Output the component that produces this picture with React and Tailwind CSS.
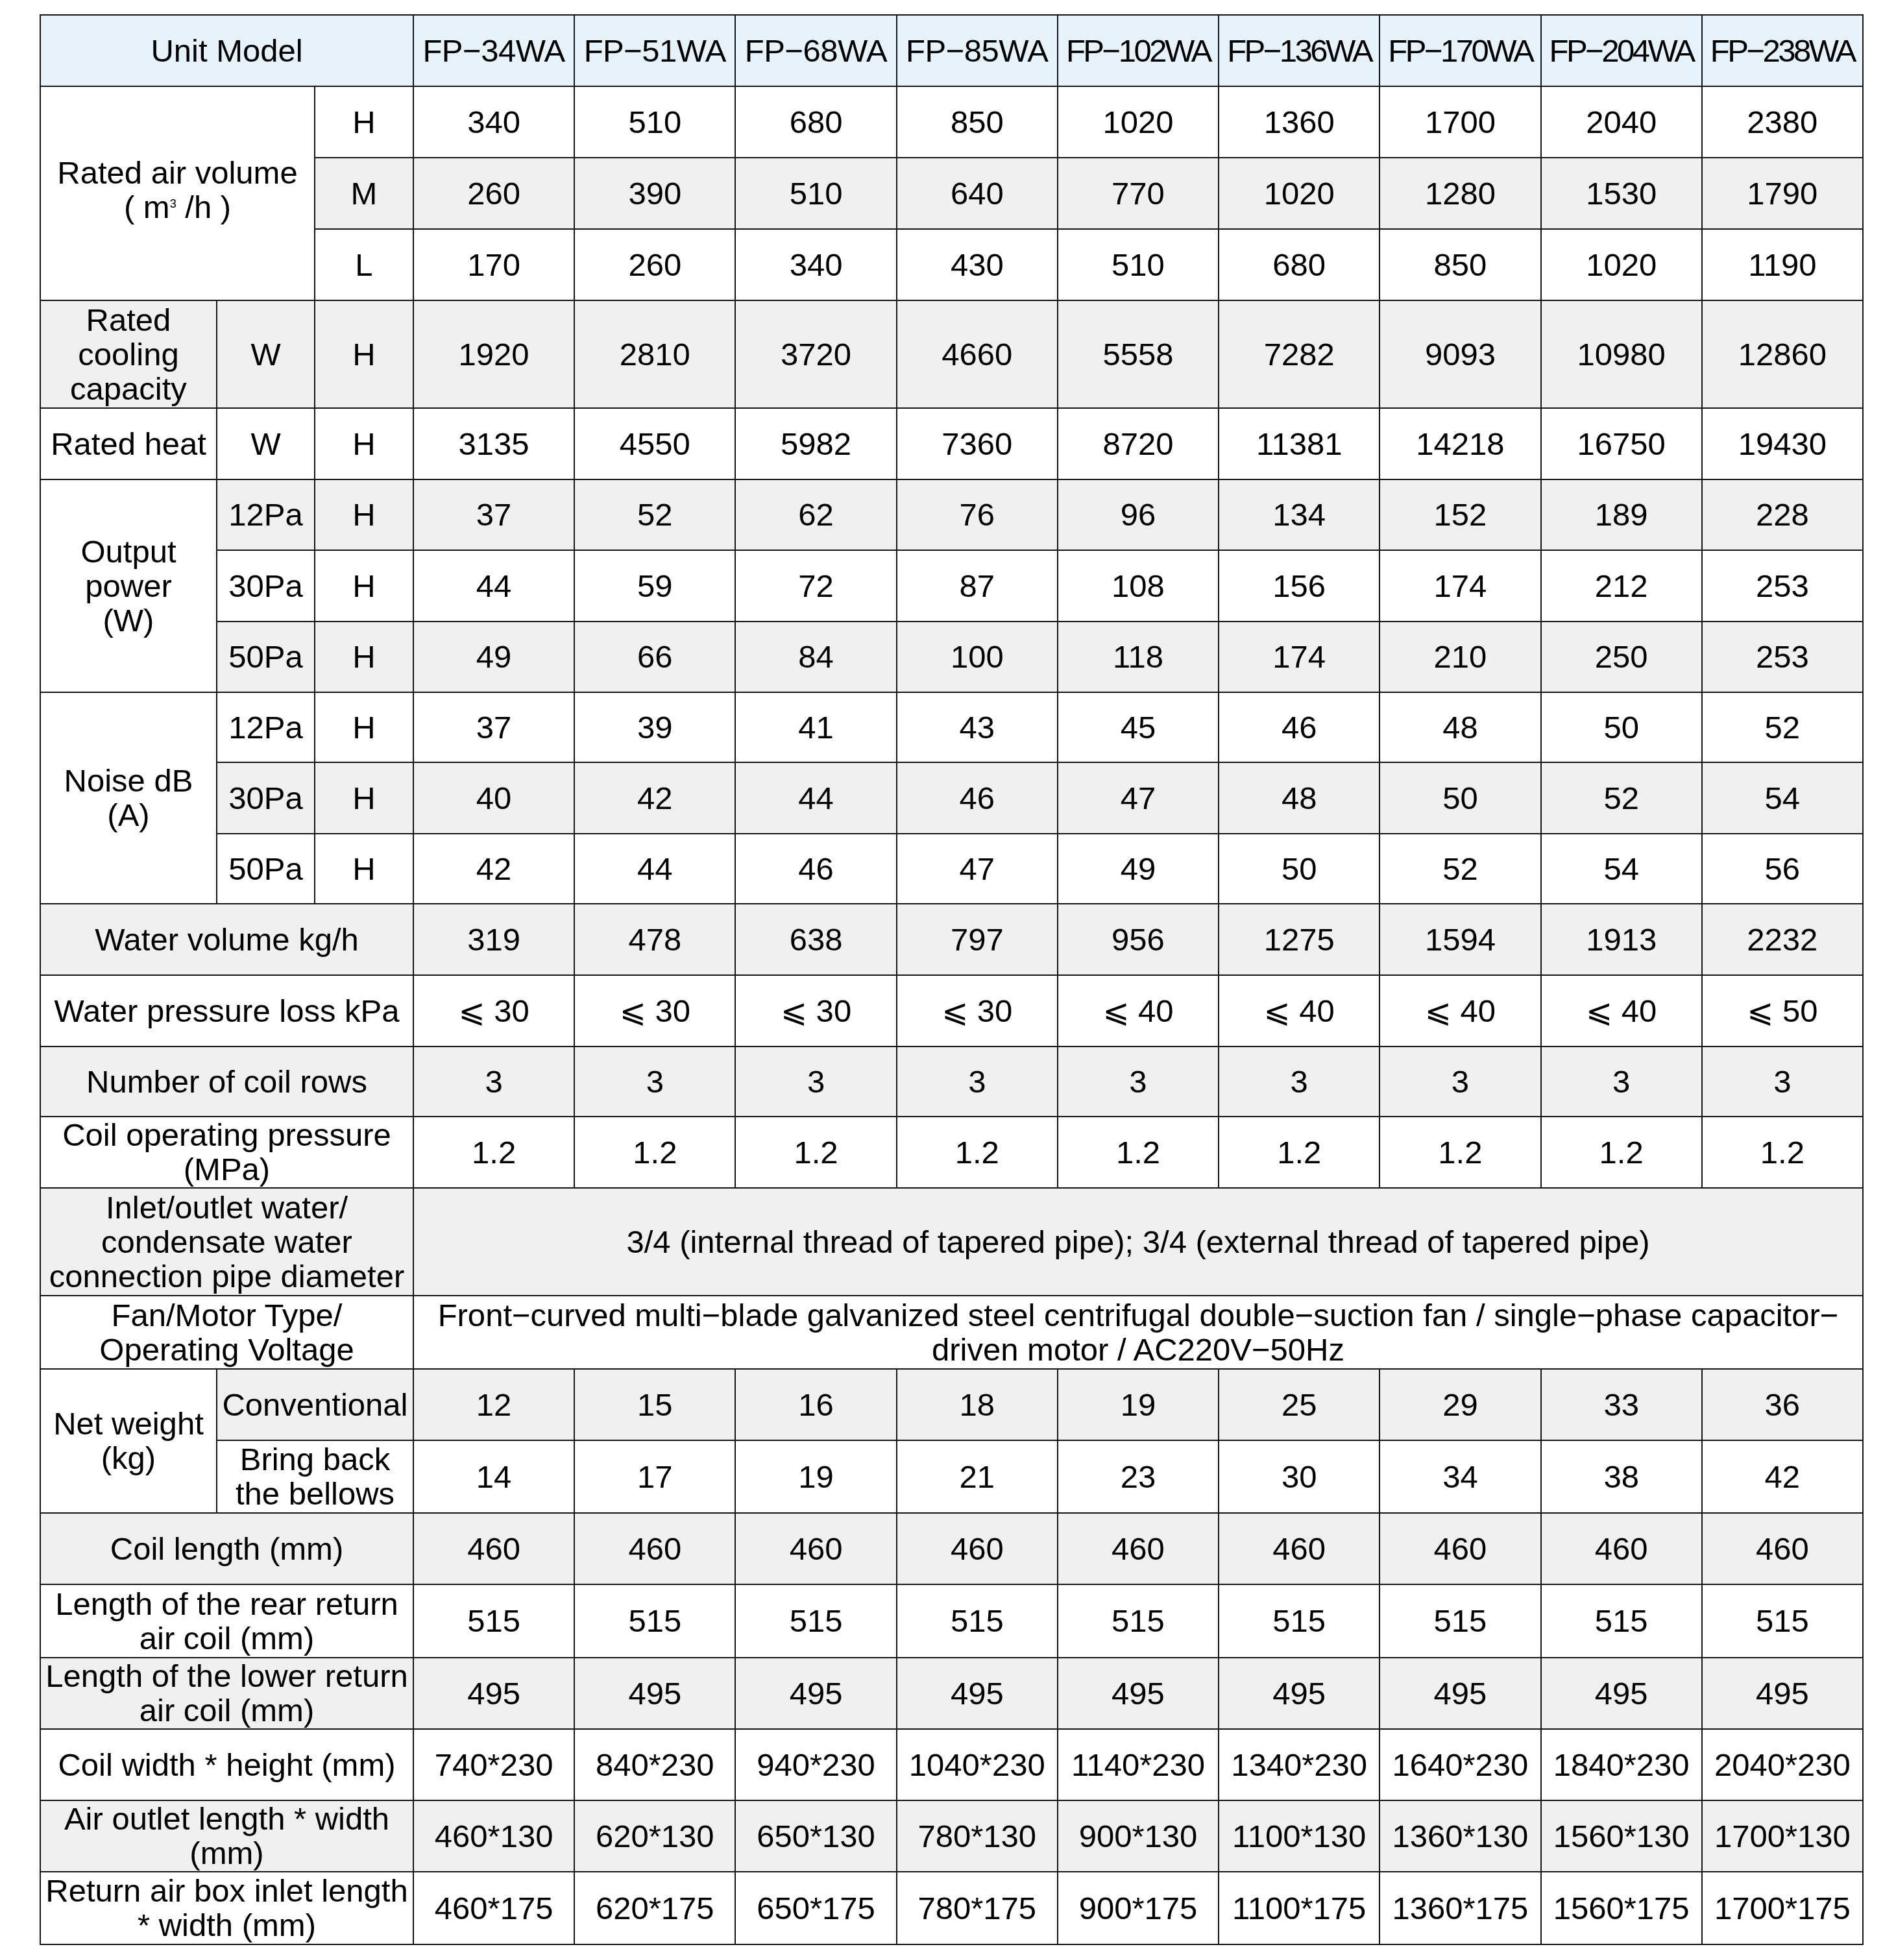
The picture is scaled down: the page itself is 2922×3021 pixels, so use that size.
const models = ['FP−34WA', 'FP−51WA', 'FP−68WA', 'FP−85WA', 'FP−102WA', 'FP−136WA', 'FP−170WA', 'FP−204WA', 'FP−238WA']

const rep = (v) => Array(9).fill(v)

const airVolume = {
  H: [340, 510, 680, 850, 1020, 1360, 1700, 2040, 2380],
  M: [260, 390, 510, 640, 770, 1020, 1280, 1530, 1790],
  L: [170, 260, 340, 430, 510, 680, 850, 1020, 1190],
}
const cooling = [1920, 2810, 3720, 4660, 5558, 7282, 9093, 10980, 12860]
const heat = [3135, 4550, 5982, 7360, 8720, 11381, 14218, 16750, 19430]
const output = [
  ['12Pa', [37, 52, 62, 76, 96, 134, 152, 189, 228]],
  ['30Pa', [44, 59, 72, 87, 108, 156, 174, 212, 253]],
  ['50Pa', [49, 66, 84, 100, 118, 174, 210, 250, 253]],
]
const noise = [
  ['12Pa', [37, 39, 41, 43, 45, 46, 48, 50, 52]],
  ['30Pa', [40, 42, 44, 46, 47, 48, 50, 52, 54]],
  ['50Pa', [42, 44, 46, 47, 49, 50, 52, 54, 56]],
]
const waterRows = [
  ['Water volume kg/h', [319, 478, 638, 797, 956, 1275, 1594, 1913, 2232], 'h-[110px]'],
  ['Water pressure loss kPa', ['⩽ 30', '⩽ 30', '⩽ 30', '⩽ 30', '⩽ 40', '⩽ 40', '⩽ 40', '⩽ 40', '⩽ 50'], 'h-[110px]'],
  ['Number of coil rows', rep(3), 'h-[108px]'],
  ['Coil operating pressure (MPa)', rep('1.2'), 'h-[110px]'],
]
const weight = {
  conv: [12, 15, 16, 18, 19, 25, 29, 33, 36],
  bellows: [14, 17, 19, 21, 23, 30, 34, 38, 42],
}
const sizeRows = [
  ['Coil length (mm)', rep(460), 'h-[110px]'],
  ['Length of the rear return air coil (mm)', rep(515), 'h-[113px]'],
  ['Length of the lower return air coil (mm)', rep(495), 'h-[110px]'],
  ['Coil width * height (mm)', ['740*230', '840*230', '940*230', '1040*230', '1140*230', '1340*230', '1640*230', '1840*230', '2040*230'], 'h-[110px]'],
  ['Air outlet length * width (mm)', ['460*130', '620*130', '650*130', '780*130', '900*130', '1100*130', '1360*130', '1560*130', '1700*130'], 'h-[110px]'],
  ['Return air box inlet length * width (mm)', ['460*175', '620*175', '650*175', '780*175', '900*175', '1100*175', '1360*175', '1560*175', '1700*175'], 'h-[112px]'],
]

function Td({ children, className = '', ...rest }) {
  return (
    <td className={'border-2 border-[#151515] px-[4px] text-center align-middle ' + className} {...rest}>
      {children}
    </td>
  )
}

function Values({ list }) {
  return list.map((v, i) => <Td key={i}>{v}</Td>)
}

const GRAY = 'bg-[#f0f0f0]'

export default function App() {
  return (
    <div className="min-h-screen bg-white pl-[61px] pt-[22px] text-black font-['Liberation_Sans',Arial,'DejaVu_Sans',sans-serif] text-[49px] leading-[53px]">
      <table className="table-fixed border-collapse w-[2811px]">
        <colgroup>
          <col className="w-[272px]" />
          <col className="w-[151px]" />
          <col className="w-[152px]" />
          {models.map((m) => <col key={m} />)}
        </colgroup>
        <tbody>
          <tr className="h-[110px] bg-[#e6f3fc]">
            <Td colSpan={3}>Unit Model</Td>
            {models.map((m) => (
              <Td key={m} className={'px-0 whitespace-nowrap ' + (m.length > 7 ? 'tracking-[-3.5px]' : 'tracking-[-0.5px]')}>
                {m}
              </Td>
            ))}
          </tr>

          {['H', 'M', 'L'].map((k, i) => {
            const bg = i === 1 ? GRAY : 'bg-white'
            return (
              <tr key={k} className={'h-[110px] ' + bg}>
                {i === 0 && (
                  <Td colSpan={2} rowSpan={3} className="bg-white">
                    Rated air volume
                    <br />( m<span className="relative -top-[16px] text-[18px]">3</span> /h )
                  </Td>
                )}
                <Td>{k}</Td>
                <Values list={airVolume[k]} />
              </tr>
            )
          })}

          <tr className={'h-[166px] ' + GRAY}>
            <Td>Rated<br />cooling<br />capacity</Td>
            <Td>W</Td>
            <Td>H</Td>
            <Values list={cooling} />
          </tr>

          <tr className="h-[110px] bg-white">
            <Td className="whitespace-nowrap px-0">Rated heat</Td>
            <Td>W</Td>
            <Td>H</Td>
            <Values list={heat} />
          </tr>

          {output.map(([pa, vals], i) => (
            <tr key={'o' + pa} className={i === 1 ? 'h-[110px] bg-white' : 'h-[109px] ' + GRAY}>
              {i === 0 && (
                <Td rowSpan={3} className="bg-white">Output<br />power<br />(W)</Td>
              )}
              <Td>{pa}</Td>
              <Td>H</Td>
              <Values list={vals} />
            </tr>
          ))}

          {noise.map(([pa, vals], i) => (
            <tr key={'n' + pa} className={i === 1 ? 'h-[110px] ' + GRAY : 'h-[108px] bg-white'}>
              {i === 0 && (
                <Td rowSpan={3} className="bg-white">Noise dB<br />(A)</Td>
              )}
              <Td>{pa}</Td>
              <Td>H</Td>
              <Values list={vals} />
            </tr>
          ))}

          {waterRows.map(([label, vals, h], i) => (
            <tr key={label} className={h + ' ' + (i % 2 === 0 ? GRAY : 'bg-white')}>
              <Td colSpan={3}>{label}</Td>
              <Values list={vals} />
            </tr>
          ))}

          <tr className={'h-[166px] ' + GRAY}>
            <Td colSpan={3}>Inlet/outlet water/ condensate water connection pipe diameter</Td>
            <Td colSpan={9}>3/4 (internal thread of tapered pipe); 3/4 (external thread of tapered pipe)</Td>
          </tr>

          <tr className="h-[113px] bg-white">
            <Td colSpan={3}>Fan/Motor Type/ Operating Voltage</Td>
            <Td colSpan={9}>
              Front−curved multi−blade galvanized steel centrifugal double−suction fan / single−phase capacitor−
              <br />
              driven motor / AC220V−50Hz
            </Td>
          </tr>

          <tr className={'h-[110px] ' + GRAY}>
            <Td rowSpan={2} className="bg-white">Net weight<br />(kg)</Td>
            <Td colSpan={2} className="px-0 whitespace-nowrap">Conventional</Td>
            <Values list={weight.conv} />
          </tr>
          <tr className="h-[112px] bg-white">
            <Td colSpan={2}>Bring back<br />the bellows</Td>
            <Values list={weight.bellows} />
          </tr>

          {sizeRows.map(([label, vals, h], i) => (
            <tr key={label} className={h + ' ' + (i % 2 === 0 ? GRAY : 'bg-white')}>
              <Td colSpan={3}>{label}</Td>
              <Values list={vals} />
            </tr>
          ))}
        </tbody>
      </table>
    </div>
  )
}
